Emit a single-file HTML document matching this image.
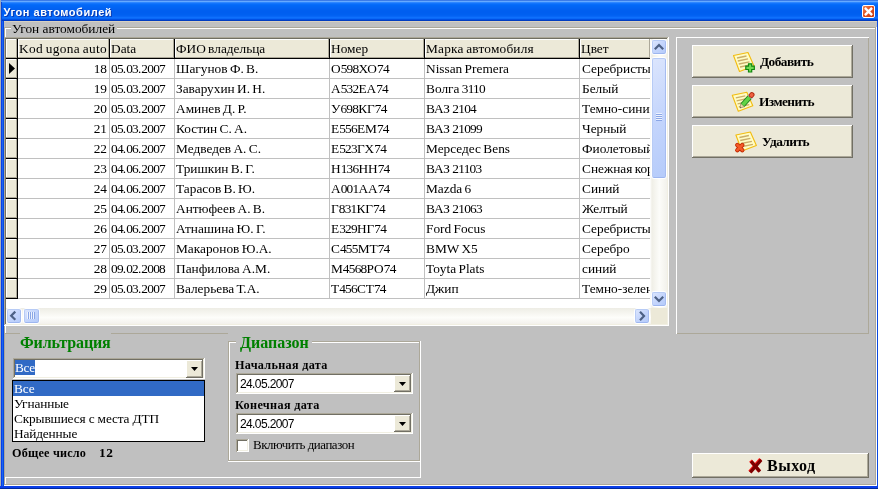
<!DOCTYPE html><html><head><meta charset="utf-8"><style>
html,body{margin:0;padding:0;width:878px;height:489px;overflow:hidden;background:#c0c0c0}
#w{position:relative;width:878px;height:489px;overflow:hidden;background:#c0c0c0;will-change:transform}
#w div{position:absolute;box-sizing:border-box}
.t{white-space:pre}
</style></head><body><div id="w">
<div style="left:0px;top:0px;width:878px;height:1px;background:#3a7be8;"></div>
<div style="left:0px;top:1px;width:878px;height:1px;background:#66aaff;"></div>
<div style="left:0px;top:2px;width:878px;height:1px;background:#2d86ff;"></div>
<div style="left:0px;top:3px;width:878px;height:1px;background:#1274fc;"></div>
<div style="left:0px;top:4px;width:878px;height:1px;background:#066cfa;"></div>
<div style="left:0px;top:5px;width:878px;height:1px;background:#0268f7;"></div>
<div style="left:0px;top:6px;width:878px;height:1px;background:#0266f5;"></div>
<div style="left:0px;top:7px;width:878px;height:1px;background:#0264f4;"></div>
<div style="left:0px;top:8px;width:878px;height:1px;background:#0262f2;"></div>
<div style="left:0px;top:9px;width:878px;height:1px;background:#0260f0;"></div>
<div style="left:0px;top:10px;width:878px;height:1px;background:#005ff0;"></div>
<div style="left:0px;top:11px;width:878px;height:1px;background:#005ef0;"></div>
<div style="left:0px;top:12px;width:878px;height:1px;background:#005ef0;"></div>
<div style="left:0px;top:13px;width:878px;height:1px;background:#005ff0;"></div>
<div style="left:0px;top:14px;width:878px;height:1px;background:#0060f1;"></div>
<div style="left:0px;top:15px;width:878px;height:1px;background:#0262f3;"></div>
<div style="left:0px;top:16px;width:878px;height:1px;background:#0866f6;"></div>
<div style="left:0px;top:17px;width:878px;height:1px;background:#0e70fc;"></div>
<div style="left:0px;top:18px;width:878px;height:1px;background:#0a68f8;"></div>
<div style="left:0px;top:19px;width:878px;height:1px;background:#0050e4;"></div>
<div style="left:0px;top:20px;width:878px;height:1px;background:#003cc0;"></div>
<div style="left:0px;top:21px;width:1px;height:468px;background:#a8b0b8;"></div>
<div style="left:1px;top:21px;width:1px;height:468px;background:#0a3ee8;"></div>
<div style="left:2px;top:21px;width:1px;height:468px;background:#1a66f0;"></div>
<div style="left:3px;top:21px;width:1px;height:468px;background:#0848e0;"></div>
<div style="left:877px;top:21px;width:1px;height:468px;background:#0a48e0;"></div>
<div style="left:0px;top:486px;width:878px;height:3px;background:#0a3ee8;"></div>
<div style="left:0px;top:488px;width:878px;height:1px;background:#002a9e;"></div>
<div class="t" style="left:3.5px;top:5.21px;line-height:14px;font:bold 11px 'Liberation Sans', sans-serif;line-height:14px;color:#fff;letter-spacing:0.55px;text-shadow:1px 1px 0 #0a3ab0">Угон автомобилей</div>
<div style="left:0px;top:0px;width:1px;height:21px;background:#9ca8c0;"></div>
<div style="left:1px;top:2px;width:1px;height:19px;background:#0846d8;"></div>
<div style="left:862px;top:5px;width:13px;height:13px;border:1px solid #fff;border-radius:2px;background:linear-gradient(135deg,#f08a5a,#e0501e 45%,#c83c10)"></div>
<svg style="position:absolute;left:862px;top:5px" width="13" height="13"><path d="M3.8 3.8 L9.2 9.2 M9.2 3.8 L3.8 9.2" stroke="#fff" stroke-width="2.4" stroke-linecap="square"/></svg>
<div style="left:4px;top:21px;width:873px;height:1px;background:#d8d0c0;"></div>
<div style="left:4px;top:27px;width:872px;height:1px;background:#aca899;"></div>
<div style="left:5px;top:28px;width:870px;height:1px;background:#ffffff;"></div>
<div style="left:4px;top:27px;width:1px;height:458px;background:#aca899;"></div>
<div style="left:5px;top:28px;width:1px;height:305px;background:#ffffff;"></div>
<div style="left:5px;top:478px;width:1px;height:6px;background:#ffffff;"></div>
<div style="left:875px;top:28px;width:1px;height:457px;background:#aca899;"></div>
<div style="left:876px;top:27px;width:1px;height:459px;background:#ffffff;"></div>
<div style="left:5px;top:484px;width:871px;height:1px;background:#aca899;"></div>
<div style="left:4px;top:485px;width:873px;height:1px;background:#ffffff;"></div>
<div style="left:11px;top:24px;width:106px;height:6px;background:#c0c0c0;"></div>
<div class="t" style="left:12px;top:20.50px;line-height:16px;font:13.33px 'Liberation Serif', serif;line-height:16px;color:#000;">Угон автомобилей</div>
<div style="left:4px;top:37px;width:664px;height:1px;background:#aca899;"></div>
<div style="left:4px;top:37px;width:1px;height:288px;background:#aca899;"></div>
<div style="left:5px;top:38px;width:662px;height:1px;background:#716f64;"></div>
<div style="left:5px;top:38px;width:1px;height:286px;background:#716f64;"></div>
<div style="left:668px;top:37px;width:1px;height:289px;background:#ffffff;"></div>
<div style="left:4px;top:325px;width:665px;height:1px;background:#ffffff;"></div>
<div style="left:667px;top:38px;width:1px;height:287px;background:#f1efe2;"></div>
<div style="left:5px;top:324px;width:663px;height:1px;background:#f1efe2;"></div>
<div style="left:6px;top:39px;width:661px;height:285px;background:#ffffff;"></div>
<div style="left:6px;top:39px;width:644px;height:20px;background:#ece9d8;"></div>
<div style="left:6px;top:58px;width:644px;height:1px;background:#000;"></div>
<div style="left:6px;top:39px;width:11px;height:1px;background:#ffffff;"></div>
<div style="left:6px;top:39px;width:1px;height:19px;background:#ffffff;"></div>
<div style="left:6px;top:57px;width:10px;height:1px;background:#aca899;"></div>
<div style="left:16px;top:39px;width:1px;height:19px;background:#aca899;"></div>
<div style="left:18px;top:39px;width:91px;height:1px;background:#ffffff;"></div>
<div style="left:18px;top:39px;width:1px;height:19px;background:#ffffff;"></div>
<div style="left:18px;top:57px;width:90px;height:1px;background:#aca899;"></div>
<div style="left:108px;top:39px;width:1px;height:19px;background:#aca899;"></div>
<div style="left:110px;top:39px;width:64px;height:1px;background:#ffffff;"></div>
<div style="left:110px;top:39px;width:1px;height:19px;background:#ffffff;"></div>
<div style="left:110px;top:57px;width:63px;height:1px;background:#aca899;"></div>
<div style="left:173px;top:39px;width:1px;height:19px;background:#aca899;"></div>
<div style="left:175px;top:39px;width:154px;height:1px;background:#ffffff;"></div>
<div style="left:175px;top:39px;width:1px;height:19px;background:#ffffff;"></div>
<div style="left:175px;top:57px;width:153px;height:1px;background:#aca899;"></div>
<div style="left:328px;top:39px;width:1px;height:19px;background:#aca899;"></div>
<div style="left:330px;top:39px;width:94px;height:1px;background:#ffffff;"></div>
<div style="left:330px;top:39px;width:1px;height:19px;background:#ffffff;"></div>
<div style="left:330px;top:57px;width:93px;height:1px;background:#aca899;"></div>
<div style="left:423px;top:39px;width:1px;height:19px;background:#aca899;"></div>
<div style="left:425px;top:39px;width:154px;height:1px;background:#ffffff;"></div>
<div style="left:425px;top:39px;width:1px;height:19px;background:#ffffff;"></div>
<div style="left:425px;top:57px;width:153px;height:1px;background:#aca899;"></div>
<div style="left:578px;top:39px;width:1px;height:19px;background:#aca899;"></div>
<div style="left:580px;top:39px;width:70px;height:1px;background:#ffffff;"></div>
<div style="left:580px;top:39px;width:1px;height:19px;background:#ffffff;"></div>
<div style="left:580px;top:57px;width:69px;height:1px;background:#aca899;"></div>
<div style="left:649px;top:39px;width:1px;height:19px;background:#aca899;"></div>
<div style="left:17px;top:39px;width:1px;height:20px;background:#000;"></div>
<div style="left:109px;top:39px;width:1px;height:20px;background:#000;"></div>
<div style="left:174px;top:39px;width:1px;height:20px;background:#000;"></div>
<div style="left:329px;top:39px;width:1px;height:20px;background:#000;"></div>
<div style="left:424px;top:39px;width:1px;height:20px;background:#000;"></div>
<div style="left:579px;top:39px;width:1px;height:20px;background:#000;"></div>
<div class="t" style="left:19px;top:40.50px;line-height:16px;font:13.33px 'Liberation Serif', serif;line-height:16px;color:#000;word-spacing:-1px;letter-spacing:0.35px">Kod ugona auto</div>
<div class="t" style="left:111px;top:40.50px;line-height:16px;font:13.33px 'Liberation Serif', serif;line-height:16px;color:#000;">Data</div>
<div class="t" style="left:176px;top:40.50px;line-height:16px;font:13.33px 'Liberation Serif', serif;line-height:16px;color:#000;word-spacing:-1px">ФИО владельца</div>
<div class="t" style="left:331px;top:40.50px;line-height:16px;font:13.33px 'Liberation Serif', serif;line-height:16px;color:#000;">Номер</div>
<div class="t" style="left:426px;top:40.50px;line-height:16px;font:13.33px 'Liberation Serif', serif;line-height:16px;color:#000;word-spacing:-1px;letter-spacing:0.2px">Марка автомобиля</div>
<div class="t" style="left:581px;top:40.50px;line-height:16px;font:13.33px 'Liberation Serif', serif;line-height:16px;color:#000;">Цвет</div>
<div style="left:6px;top:59px;width:11px;height:19px;background:#ece9d8;"></div>
<div style="left:6px;top:59px;width:11px;height:1px;background:#ffffff;"></div>
<div style="left:6px;top:59px;width:1px;height:19px;background:#ffffff;"></div>
<div style="left:6px;top:77px;width:11px;height:1px;background:#aca899;"></div>
<div style="left:16px;top:59px;width:1px;height:19px;background:#aca899;"></div>
<div style="left:6px;top:78px;width:12px;height:1px;background:#000;"></div>
<div style="left:17px;top:59px;width:1px;height:20px;background:#000;"></div>
<div style="left:18px;top:78px;width:632px;height:1px;background:#c0c0c0;"></div>
<div style="left:109px;top:59px;width:1px;height:20px;background:#c0c0c0;"></div>
<div style="left:174px;top:59px;width:1px;height:20px;background:#c0c0c0;"></div>
<div style="left:329px;top:59px;width:1px;height:20px;background:#c0c0c0;"></div>
<div style="left:424px;top:59px;width:1px;height:20px;background:#c0c0c0;"></div>
<div style="left:579px;top:59px;width:1px;height:20px;background:#c0c0c0;"></div>
<div class="t" style="left:18px;top:60.50px;line-height:16px;font:13.33px 'Liberation Serif', serif;line-height:16px;color:#000;width:89px;text-align:right"><span style="letter-spacing:0px">18</span></div>
<div class="t" style="left:111px;top:60.50px;line-height:16px;font:13.33px 'Liberation Serif', serif;line-height:16px;color:#000;word-spacing:-1px"><span style="letter-spacing:-0.75px">05</span>.<span style="letter-spacing:-0.75px">03</span>.<span style="letter-spacing:-0.75px">2007</span></div>
<div class="t" style="left:176px;top:60.50px;line-height:16px;font:13.33px 'Liberation Serif', serif;line-height:16px;color:#000;word-spacing:-1px">Шагунов Ф. В.</div>
<div class="t" style="left:331px;top:60.50px;line-height:16px;font:13.33px 'Liberation Serif', serif;line-height:16px;color:#000;word-spacing:-1px">О<span style="letter-spacing:-0.75px">598</span>ХО<span style="letter-spacing:-0.75px">74</span></div>
<div class="t" style="left:426px;top:60.50px;line-height:16px;font:13.33px 'Liberation Serif', serif;line-height:16px;color:#000;word-spacing:-1px">Nissan Premera</div>
<div style="left:580px;top:59px;width:70px;height:19px;overflow:hidden">
<div class="t" style="left:2px;top:1.50px;font:13.33px 'Liberation Serif', serif;line-height:16px;word-spacing:-1px">Серебристый</div></div>
<div style="left:6px;top:79px;width:11px;height:19px;background:#ece9d8;"></div>
<div style="left:6px;top:79px;width:11px;height:1px;background:#ffffff;"></div>
<div style="left:6px;top:79px;width:1px;height:19px;background:#ffffff;"></div>
<div style="left:6px;top:97px;width:11px;height:1px;background:#aca899;"></div>
<div style="left:16px;top:79px;width:1px;height:19px;background:#aca899;"></div>
<div style="left:6px;top:98px;width:12px;height:1px;background:#000;"></div>
<div style="left:17px;top:79px;width:1px;height:20px;background:#000;"></div>
<div style="left:18px;top:98px;width:632px;height:1px;background:#c0c0c0;"></div>
<div style="left:109px;top:79px;width:1px;height:20px;background:#c0c0c0;"></div>
<div style="left:174px;top:79px;width:1px;height:20px;background:#c0c0c0;"></div>
<div style="left:329px;top:79px;width:1px;height:20px;background:#c0c0c0;"></div>
<div style="left:424px;top:79px;width:1px;height:20px;background:#c0c0c0;"></div>
<div style="left:579px;top:79px;width:1px;height:20px;background:#c0c0c0;"></div>
<div class="t" style="left:18px;top:80.50px;line-height:16px;font:13.33px 'Liberation Serif', serif;line-height:16px;color:#000;width:89px;text-align:right"><span style="letter-spacing:0px">19</span></div>
<div class="t" style="left:111px;top:80.50px;line-height:16px;font:13.33px 'Liberation Serif', serif;line-height:16px;color:#000;word-spacing:-1px"><span style="letter-spacing:-0.75px">05</span>.<span style="letter-spacing:-0.75px">03</span>.<span style="letter-spacing:-0.75px">2007</span></div>
<div class="t" style="left:176px;top:80.50px;line-height:16px;font:13.33px 'Liberation Serif', serif;line-height:16px;color:#000;word-spacing:-1px">Заварухин И. Н.</div>
<div class="t" style="left:331px;top:80.50px;line-height:16px;font:13.33px 'Liberation Serif', serif;line-height:16px;color:#000;word-spacing:-1px">А<span style="letter-spacing:-0.75px">532</span>ЕА<span style="letter-spacing:-0.75px">74</span></div>
<div class="t" style="left:426px;top:80.50px;line-height:16px;font:13.33px 'Liberation Serif', serif;line-height:16px;color:#000;word-spacing:-1px">Волга <span style="letter-spacing:-0.75px">3110</span></div>
<div style="left:580px;top:79px;width:70px;height:19px;overflow:hidden">
<div class="t" style="left:2px;top:1.50px;font:13.33px 'Liberation Serif', serif;line-height:16px;word-spacing:-1px">Белый</div></div>
<div style="left:6px;top:99px;width:11px;height:19px;background:#ece9d8;"></div>
<div style="left:6px;top:99px;width:11px;height:1px;background:#ffffff;"></div>
<div style="left:6px;top:99px;width:1px;height:19px;background:#ffffff;"></div>
<div style="left:6px;top:117px;width:11px;height:1px;background:#aca899;"></div>
<div style="left:16px;top:99px;width:1px;height:19px;background:#aca899;"></div>
<div style="left:6px;top:118px;width:12px;height:1px;background:#000;"></div>
<div style="left:17px;top:99px;width:1px;height:20px;background:#000;"></div>
<div style="left:18px;top:118px;width:632px;height:1px;background:#c0c0c0;"></div>
<div style="left:109px;top:99px;width:1px;height:20px;background:#c0c0c0;"></div>
<div style="left:174px;top:99px;width:1px;height:20px;background:#c0c0c0;"></div>
<div style="left:329px;top:99px;width:1px;height:20px;background:#c0c0c0;"></div>
<div style="left:424px;top:99px;width:1px;height:20px;background:#c0c0c0;"></div>
<div style="left:579px;top:99px;width:1px;height:20px;background:#c0c0c0;"></div>
<div class="t" style="left:18px;top:100.50px;line-height:16px;font:13.33px 'Liberation Serif', serif;line-height:16px;color:#000;width:89px;text-align:right"><span style="letter-spacing:0px">20</span></div>
<div class="t" style="left:111px;top:100.50px;line-height:16px;font:13.33px 'Liberation Serif', serif;line-height:16px;color:#000;word-spacing:-1px"><span style="letter-spacing:-0.75px">05</span>.<span style="letter-spacing:-0.75px">03</span>.<span style="letter-spacing:-0.75px">2007</span></div>
<div class="t" style="left:176px;top:100.50px;line-height:16px;font:13.33px 'Liberation Serif', serif;line-height:16px;color:#000;word-spacing:-1px">Аминев Д. Р.</div>
<div class="t" style="left:331px;top:100.50px;line-height:16px;font:13.33px 'Liberation Serif', serif;line-height:16px;color:#000;word-spacing:-1px">У<span style="letter-spacing:-0.75px">698</span>КГ<span style="letter-spacing:-0.75px">74</span></div>
<div class="t" style="left:426px;top:100.50px;line-height:16px;font:13.33px 'Liberation Serif', serif;line-height:16px;color:#000;word-spacing:-1px">ВАЗ <span style="letter-spacing:-0.75px">2104</span></div>
<div style="left:580px;top:99px;width:70px;height:19px;overflow:hidden">
<div class="t" style="left:2px;top:1.50px;font:13.33px 'Liberation Serif', serif;line-height:16px;word-spacing:-1px">Темно-синий</div></div>
<div style="left:6px;top:119px;width:11px;height:19px;background:#ece9d8;"></div>
<div style="left:6px;top:119px;width:11px;height:1px;background:#ffffff;"></div>
<div style="left:6px;top:119px;width:1px;height:19px;background:#ffffff;"></div>
<div style="left:6px;top:137px;width:11px;height:1px;background:#aca899;"></div>
<div style="left:16px;top:119px;width:1px;height:19px;background:#aca899;"></div>
<div style="left:6px;top:138px;width:12px;height:1px;background:#000;"></div>
<div style="left:17px;top:119px;width:1px;height:20px;background:#000;"></div>
<div style="left:18px;top:138px;width:632px;height:1px;background:#c0c0c0;"></div>
<div style="left:109px;top:119px;width:1px;height:20px;background:#c0c0c0;"></div>
<div style="left:174px;top:119px;width:1px;height:20px;background:#c0c0c0;"></div>
<div style="left:329px;top:119px;width:1px;height:20px;background:#c0c0c0;"></div>
<div style="left:424px;top:119px;width:1px;height:20px;background:#c0c0c0;"></div>
<div style="left:579px;top:119px;width:1px;height:20px;background:#c0c0c0;"></div>
<div class="t" style="left:18px;top:120.50px;line-height:16px;font:13.33px 'Liberation Serif', serif;line-height:16px;color:#000;width:89px;text-align:right"><span style="letter-spacing:0px">21</span></div>
<div class="t" style="left:111px;top:120.50px;line-height:16px;font:13.33px 'Liberation Serif', serif;line-height:16px;color:#000;word-spacing:-1px"><span style="letter-spacing:-0.75px">05</span>.<span style="letter-spacing:-0.75px">03</span>.<span style="letter-spacing:-0.75px">2007</span></div>
<div class="t" style="left:176px;top:120.50px;line-height:16px;font:13.33px 'Liberation Serif', serif;line-height:16px;color:#000;word-spacing:-1px">Костин С. А.</div>
<div class="t" style="left:331px;top:120.50px;line-height:16px;font:13.33px 'Liberation Serif', serif;line-height:16px;color:#000;word-spacing:-1px">Е<span style="letter-spacing:-0.75px">556</span>ЕМ<span style="letter-spacing:-0.75px">74</span></div>
<div class="t" style="left:426px;top:120.50px;line-height:16px;font:13.33px 'Liberation Serif', serif;line-height:16px;color:#000;word-spacing:-1px">ВАЗ <span style="letter-spacing:-0.75px">21099</span></div>
<div style="left:580px;top:119px;width:70px;height:19px;overflow:hidden">
<div class="t" style="left:2px;top:1.50px;font:13.33px 'Liberation Serif', serif;line-height:16px;word-spacing:-1px">Черный</div></div>
<div style="left:6px;top:139px;width:11px;height:19px;background:#ece9d8;"></div>
<div style="left:6px;top:139px;width:11px;height:1px;background:#ffffff;"></div>
<div style="left:6px;top:139px;width:1px;height:19px;background:#ffffff;"></div>
<div style="left:6px;top:157px;width:11px;height:1px;background:#aca899;"></div>
<div style="left:16px;top:139px;width:1px;height:19px;background:#aca899;"></div>
<div style="left:6px;top:158px;width:12px;height:1px;background:#000;"></div>
<div style="left:17px;top:139px;width:1px;height:20px;background:#000;"></div>
<div style="left:18px;top:158px;width:632px;height:1px;background:#c0c0c0;"></div>
<div style="left:109px;top:139px;width:1px;height:20px;background:#c0c0c0;"></div>
<div style="left:174px;top:139px;width:1px;height:20px;background:#c0c0c0;"></div>
<div style="left:329px;top:139px;width:1px;height:20px;background:#c0c0c0;"></div>
<div style="left:424px;top:139px;width:1px;height:20px;background:#c0c0c0;"></div>
<div style="left:579px;top:139px;width:1px;height:20px;background:#c0c0c0;"></div>
<div class="t" style="left:18px;top:140.50px;line-height:16px;font:13.33px 'Liberation Serif', serif;line-height:16px;color:#000;width:89px;text-align:right"><span style="letter-spacing:0px">22</span></div>
<div class="t" style="left:111px;top:140.50px;line-height:16px;font:13.33px 'Liberation Serif', serif;line-height:16px;color:#000;word-spacing:-1px"><span style="letter-spacing:-0.75px">04</span>.<span style="letter-spacing:-0.75px">06</span>.<span style="letter-spacing:-0.75px">2007</span></div>
<div class="t" style="left:176px;top:140.50px;line-height:16px;font:13.33px 'Liberation Serif', serif;line-height:16px;color:#000;word-spacing:-1px">Медведев А. С.</div>
<div class="t" style="left:331px;top:140.50px;line-height:16px;font:13.33px 'Liberation Serif', serif;line-height:16px;color:#000;word-spacing:-1px">Е<span style="letter-spacing:-0.75px">523</span>ГХ<span style="letter-spacing:-0.75px">74</span></div>
<div class="t" style="left:426px;top:140.50px;line-height:16px;font:13.33px 'Liberation Serif', serif;line-height:16px;color:#000;word-spacing:-1px">Мерседес Bens</div>
<div style="left:580px;top:139px;width:70px;height:19px;overflow:hidden">
<div class="t" style="left:2px;top:1.50px;font:13.33px 'Liberation Serif', serif;line-height:16px;word-spacing:-1px">Фиолетовый</div></div>
<div style="left:6px;top:159px;width:11px;height:19px;background:#ece9d8;"></div>
<div style="left:6px;top:159px;width:11px;height:1px;background:#ffffff;"></div>
<div style="left:6px;top:159px;width:1px;height:19px;background:#ffffff;"></div>
<div style="left:6px;top:177px;width:11px;height:1px;background:#aca899;"></div>
<div style="left:16px;top:159px;width:1px;height:19px;background:#aca899;"></div>
<div style="left:6px;top:178px;width:12px;height:1px;background:#000;"></div>
<div style="left:17px;top:159px;width:1px;height:20px;background:#000;"></div>
<div style="left:18px;top:178px;width:632px;height:1px;background:#c0c0c0;"></div>
<div style="left:109px;top:159px;width:1px;height:20px;background:#c0c0c0;"></div>
<div style="left:174px;top:159px;width:1px;height:20px;background:#c0c0c0;"></div>
<div style="left:329px;top:159px;width:1px;height:20px;background:#c0c0c0;"></div>
<div style="left:424px;top:159px;width:1px;height:20px;background:#c0c0c0;"></div>
<div style="left:579px;top:159px;width:1px;height:20px;background:#c0c0c0;"></div>
<div class="t" style="left:18px;top:160.50px;line-height:16px;font:13.33px 'Liberation Serif', serif;line-height:16px;color:#000;width:89px;text-align:right"><span style="letter-spacing:0px">23</span></div>
<div class="t" style="left:111px;top:160.50px;line-height:16px;font:13.33px 'Liberation Serif', serif;line-height:16px;color:#000;word-spacing:-1px"><span style="letter-spacing:-0.75px">04</span>.<span style="letter-spacing:-0.75px">06</span>.<span style="letter-spacing:-0.75px">2007</span></div>
<div class="t" style="left:176px;top:160.50px;line-height:16px;font:13.33px 'Liberation Serif', serif;line-height:16px;color:#000;word-spacing:-1px">Тришкин В. Г.</div>
<div class="t" style="left:331px;top:160.50px;line-height:16px;font:13.33px 'Liberation Serif', serif;line-height:16px;color:#000;word-spacing:-1px">Н<span style="letter-spacing:-0.75px">136</span>НН<span style="letter-spacing:-0.75px">74</span></div>
<div class="t" style="left:426px;top:160.50px;line-height:16px;font:13.33px 'Liberation Serif', serif;line-height:16px;color:#000;word-spacing:-1px">ВАЗ <span style="letter-spacing:-0.75px">21103</span></div>
<div style="left:580px;top:159px;width:70px;height:19px;overflow:hidden">
<div class="t" style="left:2px;top:1.50px;font:13.33px 'Liberation Serif', serif;line-height:16px;word-spacing:-1px">Снежная королева</div></div>
<div style="left:6px;top:179px;width:11px;height:19px;background:#ece9d8;"></div>
<div style="left:6px;top:179px;width:11px;height:1px;background:#ffffff;"></div>
<div style="left:6px;top:179px;width:1px;height:19px;background:#ffffff;"></div>
<div style="left:6px;top:197px;width:11px;height:1px;background:#aca899;"></div>
<div style="left:16px;top:179px;width:1px;height:19px;background:#aca899;"></div>
<div style="left:6px;top:198px;width:12px;height:1px;background:#000;"></div>
<div style="left:17px;top:179px;width:1px;height:20px;background:#000;"></div>
<div style="left:18px;top:198px;width:632px;height:1px;background:#c0c0c0;"></div>
<div style="left:109px;top:179px;width:1px;height:20px;background:#c0c0c0;"></div>
<div style="left:174px;top:179px;width:1px;height:20px;background:#c0c0c0;"></div>
<div style="left:329px;top:179px;width:1px;height:20px;background:#c0c0c0;"></div>
<div style="left:424px;top:179px;width:1px;height:20px;background:#c0c0c0;"></div>
<div style="left:579px;top:179px;width:1px;height:20px;background:#c0c0c0;"></div>
<div class="t" style="left:18px;top:180.50px;line-height:16px;font:13.33px 'Liberation Serif', serif;line-height:16px;color:#000;width:89px;text-align:right"><span style="letter-spacing:0px">24</span></div>
<div class="t" style="left:111px;top:180.50px;line-height:16px;font:13.33px 'Liberation Serif', serif;line-height:16px;color:#000;word-spacing:-1px"><span style="letter-spacing:-0.75px">04</span>.<span style="letter-spacing:-0.75px">06</span>.<span style="letter-spacing:-0.75px">2007</span></div>
<div class="t" style="left:176px;top:180.50px;line-height:16px;font:13.33px 'Liberation Serif', serif;line-height:16px;color:#000;word-spacing:-1px">Тарасов В. Ю.</div>
<div class="t" style="left:331px;top:180.50px;line-height:16px;font:13.33px 'Liberation Serif', serif;line-height:16px;color:#000;word-spacing:-1px">А<span style="letter-spacing:-0.75px">001</span>АА<span style="letter-spacing:-0.75px">74</span></div>
<div class="t" style="left:426px;top:180.50px;line-height:16px;font:13.33px 'Liberation Serif', serif;line-height:16px;color:#000;word-spacing:-1px">Mazda <span style="letter-spacing:-0.75px">6</span></div>
<div style="left:580px;top:179px;width:70px;height:19px;overflow:hidden">
<div class="t" style="left:2px;top:1.50px;font:13.33px 'Liberation Serif', serif;line-height:16px;word-spacing:-1px">Синий</div></div>
<div style="left:6px;top:199px;width:11px;height:19px;background:#ece9d8;"></div>
<div style="left:6px;top:199px;width:11px;height:1px;background:#ffffff;"></div>
<div style="left:6px;top:199px;width:1px;height:19px;background:#ffffff;"></div>
<div style="left:6px;top:217px;width:11px;height:1px;background:#aca899;"></div>
<div style="left:16px;top:199px;width:1px;height:19px;background:#aca899;"></div>
<div style="left:6px;top:218px;width:12px;height:1px;background:#000;"></div>
<div style="left:17px;top:199px;width:1px;height:20px;background:#000;"></div>
<div style="left:18px;top:218px;width:632px;height:1px;background:#c0c0c0;"></div>
<div style="left:109px;top:199px;width:1px;height:20px;background:#c0c0c0;"></div>
<div style="left:174px;top:199px;width:1px;height:20px;background:#c0c0c0;"></div>
<div style="left:329px;top:199px;width:1px;height:20px;background:#c0c0c0;"></div>
<div style="left:424px;top:199px;width:1px;height:20px;background:#c0c0c0;"></div>
<div style="left:579px;top:199px;width:1px;height:20px;background:#c0c0c0;"></div>
<div class="t" style="left:18px;top:200.50px;line-height:16px;font:13.33px 'Liberation Serif', serif;line-height:16px;color:#000;width:89px;text-align:right"><span style="letter-spacing:0px">25</span></div>
<div class="t" style="left:111px;top:200.50px;line-height:16px;font:13.33px 'Liberation Serif', serif;line-height:16px;color:#000;word-spacing:-1px"><span style="letter-spacing:-0.75px">04</span>.<span style="letter-spacing:-0.75px">06</span>.<span style="letter-spacing:-0.75px">2007</span></div>
<div class="t" style="left:176px;top:200.50px;line-height:16px;font:13.33px 'Liberation Serif', serif;line-height:16px;color:#000;word-spacing:-1px">Антюфеев А. В.</div>
<div class="t" style="left:331px;top:200.50px;line-height:16px;font:13.33px 'Liberation Serif', serif;line-height:16px;color:#000;word-spacing:-1px">Г<span style="letter-spacing:-0.75px">831</span>КГ<span style="letter-spacing:-0.75px">74</span></div>
<div class="t" style="left:426px;top:200.50px;line-height:16px;font:13.33px 'Liberation Serif', serif;line-height:16px;color:#000;word-spacing:-1px">ВАЗ <span style="letter-spacing:-0.75px">21063</span></div>
<div style="left:580px;top:199px;width:70px;height:19px;overflow:hidden">
<div class="t" style="left:2px;top:1.50px;font:13.33px 'Liberation Serif', serif;line-height:16px;word-spacing:-1px">Желтый</div></div>
<div style="left:6px;top:219px;width:11px;height:19px;background:#ece9d8;"></div>
<div style="left:6px;top:219px;width:11px;height:1px;background:#ffffff;"></div>
<div style="left:6px;top:219px;width:1px;height:19px;background:#ffffff;"></div>
<div style="left:6px;top:237px;width:11px;height:1px;background:#aca899;"></div>
<div style="left:16px;top:219px;width:1px;height:19px;background:#aca899;"></div>
<div style="left:6px;top:238px;width:12px;height:1px;background:#000;"></div>
<div style="left:17px;top:219px;width:1px;height:20px;background:#000;"></div>
<div style="left:18px;top:238px;width:632px;height:1px;background:#c0c0c0;"></div>
<div style="left:109px;top:219px;width:1px;height:20px;background:#c0c0c0;"></div>
<div style="left:174px;top:219px;width:1px;height:20px;background:#c0c0c0;"></div>
<div style="left:329px;top:219px;width:1px;height:20px;background:#c0c0c0;"></div>
<div style="left:424px;top:219px;width:1px;height:20px;background:#c0c0c0;"></div>
<div style="left:579px;top:219px;width:1px;height:20px;background:#c0c0c0;"></div>
<div class="t" style="left:18px;top:220.50px;line-height:16px;font:13.33px 'Liberation Serif', serif;line-height:16px;color:#000;width:89px;text-align:right"><span style="letter-spacing:0px">26</span></div>
<div class="t" style="left:111px;top:220.50px;line-height:16px;font:13.33px 'Liberation Serif', serif;line-height:16px;color:#000;word-spacing:-1px"><span style="letter-spacing:-0.75px">04</span>.<span style="letter-spacing:-0.75px">06</span>.<span style="letter-spacing:-0.75px">2007</span></div>
<div class="t" style="left:176px;top:220.50px;line-height:16px;font:13.33px 'Liberation Serif', serif;line-height:16px;color:#000;word-spacing:-1px">Атнашина Ю. Г.</div>
<div class="t" style="left:331px;top:220.50px;line-height:16px;font:13.33px 'Liberation Serif', serif;line-height:16px;color:#000;word-spacing:-1px">Е<span style="letter-spacing:-0.75px">329</span>НГ<span style="letter-spacing:-0.75px">74</span></div>
<div class="t" style="left:426px;top:220.50px;line-height:16px;font:13.33px 'Liberation Serif', serif;line-height:16px;color:#000;word-spacing:-1px">Ford Focus</div>
<div style="left:580px;top:219px;width:70px;height:19px;overflow:hidden">
<div class="t" style="left:2px;top:1.50px;font:13.33px 'Liberation Serif', serif;line-height:16px;word-spacing:-1px">Серебристый</div></div>
<div style="left:6px;top:239px;width:11px;height:19px;background:#ece9d8;"></div>
<div style="left:6px;top:239px;width:11px;height:1px;background:#ffffff;"></div>
<div style="left:6px;top:239px;width:1px;height:19px;background:#ffffff;"></div>
<div style="left:6px;top:257px;width:11px;height:1px;background:#aca899;"></div>
<div style="left:16px;top:239px;width:1px;height:19px;background:#aca899;"></div>
<div style="left:6px;top:258px;width:12px;height:1px;background:#000;"></div>
<div style="left:17px;top:239px;width:1px;height:20px;background:#000;"></div>
<div style="left:18px;top:258px;width:632px;height:1px;background:#c0c0c0;"></div>
<div style="left:109px;top:239px;width:1px;height:20px;background:#c0c0c0;"></div>
<div style="left:174px;top:239px;width:1px;height:20px;background:#c0c0c0;"></div>
<div style="left:329px;top:239px;width:1px;height:20px;background:#c0c0c0;"></div>
<div style="left:424px;top:239px;width:1px;height:20px;background:#c0c0c0;"></div>
<div style="left:579px;top:239px;width:1px;height:20px;background:#c0c0c0;"></div>
<div class="t" style="left:18px;top:240.50px;line-height:16px;font:13.33px 'Liberation Serif', serif;line-height:16px;color:#000;width:89px;text-align:right"><span style="letter-spacing:0px">27</span></div>
<div class="t" style="left:111px;top:240.50px;line-height:16px;font:13.33px 'Liberation Serif', serif;line-height:16px;color:#000;word-spacing:-1px"><span style="letter-spacing:-0.75px">05</span>.<span style="letter-spacing:-0.75px">03</span>.<span style="letter-spacing:-0.75px">2007</span></div>
<div class="t" style="left:176px;top:240.50px;line-height:16px;font:13.33px 'Liberation Serif', serif;line-height:16px;color:#000;word-spacing:-1px">Макаронов Ю.А.</div>
<div class="t" style="left:331px;top:240.50px;line-height:16px;font:13.33px 'Liberation Serif', serif;line-height:16px;color:#000;word-spacing:-1px">С<span style="letter-spacing:-0.75px">455</span>МТ<span style="letter-spacing:-0.75px">74</span></div>
<div class="t" style="left:426px;top:240.50px;line-height:16px;font:13.33px 'Liberation Serif', serif;line-height:16px;color:#000;word-spacing:-1px">BMW X<span style="letter-spacing:-0.75px">5</span></div>
<div style="left:580px;top:239px;width:70px;height:19px;overflow:hidden">
<div class="t" style="left:2px;top:1.50px;font:13.33px 'Liberation Serif', serif;line-height:16px;word-spacing:-1px">Серебро</div></div>
<div style="left:6px;top:259px;width:11px;height:19px;background:#ece9d8;"></div>
<div style="left:6px;top:259px;width:11px;height:1px;background:#ffffff;"></div>
<div style="left:6px;top:259px;width:1px;height:19px;background:#ffffff;"></div>
<div style="left:6px;top:277px;width:11px;height:1px;background:#aca899;"></div>
<div style="left:16px;top:259px;width:1px;height:19px;background:#aca899;"></div>
<div style="left:6px;top:278px;width:12px;height:1px;background:#000;"></div>
<div style="left:17px;top:259px;width:1px;height:20px;background:#000;"></div>
<div style="left:18px;top:278px;width:632px;height:1px;background:#c0c0c0;"></div>
<div style="left:109px;top:259px;width:1px;height:20px;background:#c0c0c0;"></div>
<div style="left:174px;top:259px;width:1px;height:20px;background:#c0c0c0;"></div>
<div style="left:329px;top:259px;width:1px;height:20px;background:#c0c0c0;"></div>
<div style="left:424px;top:259px;width:1px;height:20px;background:#c0c0c0;"></div>
<div style="left:579px;top:259px;width:1px;height:20px;background:#c0c0c0;"></div>
<div class="t" style="left:18px;top:260.50px;line-height:16px;font:13.33px 'Liberation Serif', serif;line-height:16px;color:#000;width:89px;text-align:right"><span style="letter-spacing:0px">28</span></div>
<div class="t" style="left:111px;top:260.50px;line-height:16px;font:13.33px 'Liberation Serif', serif;line-height:16px;color:#000;word-spacing:-1px"><span style="letter-spacing:-0.75px">09</span>.<span style="letter-spacing:-0.75px">02</span>.<span style="letter-spacing:-0.75px">2008</span></div>
<div class="t" style="left:176px;top:260.50px;line-height:16px;font:13.33px 'Liberation Serif', serif;line-height:16px;color:#000;word-spacing:-1px">Панфилова А.М.</div>
<div class="t" style="left:331px;top:260.50px;line-height:16px;font:13.33px 'Liberation Serif', serif;line-height:16px;color:#000;word-spacing:-1px">М<span style="letter-spacing:-0.75px">4568</span>РО<span style="letter-spacing:-0.75px">74</span></div>
<div class="t" style="left:426px;top:260.50px;line-height:16px;font:13.33px 'Liberation Serif', serif;line-height:16px;color:#000;word-spacing:-1px">Toyta Plats</div>
<div style="left:580px;top:259px;width:70px;height:19px;overflow:hidden">
<div class="t" style="left:2px;top:1.50px;font:13.33px 'Liberation Serif', serif;line-height:16px;word-spacing:-1px">синий</div></div>
<div style="left:6px;top:279px;width:11px;height:19px;background:#ece9d8;"></div>
<div style="left:6px;top:279px;width:11px;height:1px;background:#ffffff;"></div>
<div style="left:6px;top:279px;width:1px;height:19px;background:#ffffff;"></div>
<div style="left:6px;top:297px;width:11px;height:1px;background:#aca899;"></div>
<div style="left:16px;top:279px;width:1px;height:19px;background:#aca899;"></div>
<div style="left:6px;top:298px;width:12px;height:1px;background:#000;"></div>
<div style="left:17px;top:279px;width:1px;height:20px;background:#000;"></div>
<div style="left:18px;top:298px;width:632px;height:1px;background:#c0c0c0;"></div>
<div style="left:109px;top:279px;width:1px;height:20px;background:#c0c0c0;"></div>
<div style="left:174px;top:279px;width:1px;height:20px;background:#c0c0c0;"></div>
<div style="left:329px;top:279px;width:1px;height:20px;background:#c0c0c0;"></div>
<div style="left:424px;top:279px;width:1px;height:20px;background:#c0c0c0;"></div>
<div style="left:579px;top:279px;width:1px;height:20px;background:#c0c0c0;"></div>
<div class="t" style="left:18px;top:280.50px;line-height:16px;font:13.33px 'Liberation Serif', serif;line-height:16px;color:#000;width:89px;text-align:right"><span style="letter-spacing:0px">29</span></div>
<div class="t" style="left:111px;top:280.50px;line-height:16px;font:13.33px 'Liberation Serif', serif;line-height:16px;color:#000;word-spacing:-1px"><span style="letter-spacing:-0.75px">05</span>.<span style="letter-spacing:-0.75px">03</span>.<span style="letter-spacing:-0.75px">2007</span></div>
<div class="t" style="left:176px;top:280.50px;line-height:16px;font:13.33px 'Liberation Serif', serif;line-height:16px;color:#000;word-spacing:-1px">Валерьева Т.А.</div>
<div class="t" style="left:331px;top:280.50px;line-height:16px;font:13.33px 'Liberation Serif', serif;line-height:16px;color:#000;word-spacing:-1px">Т<span style="letter-spacing:-0.75px">456</span>СТ<span style="letter-spacing:-0.75px">74</span></div>
<div class="t" style="left:426px;top:280.50px;line-height:16px;font:13.33px 'Liberation Serif', serif;line-height:16px;color:#000;word-spacing:-1px">Джип</div>
<div style="left:580px;top:279px;width:70px;height:19px;overflow:hidden">
<div class="t" style="left:2px;top:1.50px;font:13.33px 'Liberation Serif', serif;line-height:16px;word-spacing:-1px">Темно-зеленый</div></div>
<svg style="position:absolute;left:9px;top:63px" width="7" height="12"><path d="M0 0 L6 5.5 L0 11 Z" fill="#000"/></svg>
<div style="left:650px;top:39px;width:17px;height:269px;background:linear-gradient(90deg,#ffffff 0,#f0efe7 2px,#fcfcf9 55%,#f2f1eb);"></div>
<div style="left:6px;top:308px;width:645px;height:16px;background:linear-gradient(180deg,#eeede5,#fdfdfa 60%,#f3f1ec);"></div>
<div style="left:651px;top:308px;width:16px;height:16px;background:#ece9d8;"></div>
<div style="left:651px;top:39px;width:16px;height:16px;border:1px solid #fff;border-radius:3px;background:#fff"></div>
<div style="left:652px;top:40px;width:14px;height:14px;border-radius:2px;border:1px solid #b7cbf5;border-bottom-color:#9db6ef;border-right-color:#a6bcf0;background:linear-gradient(135deg,#dbe5fd,#c4d5fc 50%,#b5cbfa)"></div>
<svg style="position:absolute;left:651px;top:39px" width="16" height="16"><path d="M3.8 10.2 L8 6 L12.2 10.2" fill="none" stroke="#4d6185" stroke-width="2.2"/></svg>
<div style="left:651px;top:57px;width:16px;height:122px;border:1px solid #fff;border-radius:3px;background:#fff"></div>
<div style="left:652px;top:58px;width:14px;height:120px;border-radius:2px;border:1px solid #b7cbf5;border-bottom-color:#9db6ef;border-right-color:#a6bcf0;background:linear-gradient(135deg,#dbe5fd,#c4d5fc 50%,#b5cbfa)"></div>
<svg style="position:absolute;left:651px;top:57px" width="16" height="122"><path d="M5 56.5 H11" stroke="#eef3fe" stroke-width="1"/><path d="M5 57.5 H11" stroke="#8aa6e6" stroke-width="1"/><path d="M5 58.5 H11" stroke="#eef3fe" stroke-width="1"/><path d="M5 59.5 H11" stroke="#8aa6e6" stroke-width="1"/><path d="M5 60.5 H11" stroke="#eef3fe" stroke-width="1"/><path d="M5 61.5 H11" stroke="#8aa6e6" stroke-width="1"/><path d="M5 62.5 H11" stroke="#eef3fe" stroke-width="1"/><path d="M5 63.5 H11" stroke="#8aa6e6" stroke-width="1"/></svg>
<div style="left:651px;top:291px;width:16px;height:16px;border:1px solid #fff;border-radius:3px;background:#fff"></div>
<div style="left:652px;top:292px;width:14px;height:14px;border-radius:2px;border:1px solid #b7cbf5;border-bottom-color:#9db6ef;border-right-color:#a6bcf0;background:linear-gradient(135deg,#dbe5fd,#c4d5fc 50%,#b5cbfa)"></div>
<svg style="position:absolute;left:651px;top:291px" width="16" height="16"><path d="M3.8 5.8 L8 10 L12.2 5.8" fill="none" stroke="#4d6185" stroke-width="2.2"/></svg>
<div style="left:6px;top:308px;width:16px;height:16px;border:1px solid #fff;border-radius:3px;background:#fff"></div>
<div style="left:7px;top:309px;width:14px;height:14px;border-radius:2px;border:1px solid #b7cbf5;border-bottom-color:#9db6ef;border-right-color:#a6bcf0;background:linear-gradient(135deg,#dbe5fd,#c4d5fc 50%,#b5cbfa)"></div>
<svg style="position:absolute;left:6px;top:308px" width="16" height="16"><path d="M9.3 3.6 L5.2 7.7 L9.3 11.8" fill="none" stroke="#4d6185" stroke-width="2.2"/></svg>
<div style="left:23px;top:308px;width:17px;height:16px;border:1px solid #fff;border-radius:3px;background:#fff"></div>
<div style="left:24px;top:309px;width:15px;height:14px;border-radius:2px;border:1px solid #b7cbf5;border-bottom-color:#9db6ef;border-right-color:#a6bcf0;background:linear-gradient(135deg,#dbe5fd,#c4d5fc 50%,#b5cbfa)"></div>
<svg style="position:absolute;left:23px;top:308px" width="17" height="16"><path d="M4.5 4 V11" stroke="#eef3fe" stroke-width="1"/><path d="M5.5 4 V11" stroke="#8aa6e6" stroke-width="1"/><path d="M6.5 4 V11" stroke="#eef3fe" stroke-width="1"/><path d="M7.5 4 V11" stroke="#8aa6e6" stroke-width="1"/><path d="M8.5 4 V11" stroke="#eef3fe" stroke-width="1"/><path d="M9.5 4 V11" stroke="#8aa6e6" stroke-width="1"/><path d="M10.5 4 V11" stroke="#eef3fe" stroke-width="1"/><path d="M11.5 4 V11" stroke="#8aa6e6" stroke-width="1"/></svg>
<div style="left:634px;top:308px;width:16px;height:16px;border:1px solid #fff;border-radius:3px;background:#fff"></div>
<div style="left:635px;top:309px;width:14px;height:14px;border-radius:2px;border:1px solid #b7cbf5;border-bottom-color:#9db6ef;border-right-color:#a6bcf0;background:linear-gradient(135deg,#dbe5fd,#c4d5fc 50%,#b5cbfa)"></div>
<svg style="position:absolute;left:634px;top:308px" width="16" height="16"><path d="M6 3.8 L10 8 L6 12.2" fill="none" stroke="#4d6185" stroke-width="2.2"/></svg>
<div style="left:676px;top:37px;width:193px;height:1px;background:#ffffff;"></div>
<div style="left:676px;top:37px;width:1px;height:297px;background:#ffffff;"></div>
<div style="left:868px;top:38px;width:1px;height:296px;background:#aca899;"></div>
<div style="left:677px;top:333px;width:192px;height:1px;background:#aca899;"></div>
<div style="left:692px;top:45px;width:161px;height:33px;background:#ece9d8;"></div>
<div style="left:692px;top:45px;width:160px;height:1px;background:#ffffff;"></div>
<div style="left:692px;top:45px;width:1px;height:32px;background:#ffffff;"></div>
<div style="left:693px;top:76px;width:159px;height:1px;background:#aca899;"></div>
<div style="left:851px;top:46px;width:1px;height:31px;background:#aca899;"></div>
<div style="left:692px;top:77px;width:161px;height:1px;background:#716f64;"></div>
<div style="left:852px;top:45px;width:1px;height:33px;background:#716f64;"></div>
<svg style="position:absolute;left:731px;top:50px" width="28" height="26"><g transform="translate(1,1)">
<path d="M1.5 4.5 L16 1.5 L22 15 L7.5 20.5 Z" fill="#fffcc4" stroke="#f2bc10" stroke-width="1.1" stroke-linejoin="round"/>
<path d="M5 7 L14.5 5 M5.8 10 L16 7.8 M6.8 13 L17.5 10.8 M8 16 L18.5 13.8" stroke="#c9ad6a" stroke-width="1.3"/>
</g><path d="M17.5 13.8 H20.7 V16.2 H23.3 V19.5 H20.7 V22 H17.5 V19.5 H14.8 V16.2 H17.5 Z" fill="#72dc52" stroke="#0f860f" stroke-width="1.2" stroke-linejoin="miter"/></svg>
<div class="t" style="left:760px;top:53.50px;line-height:16px;font:bold 13.33px 'Liberation Serif', serif;line-height:16px;color:#000;letter-spacing:-0.55px">Добавить</div>
<div style="left:692px;top:85px;width:161px;height:33px;background:#ece9d8;"></div>
<div style="left:692px;top:85px;width:160px;height:1px;background:#ffffff;"></div>
<div style="left:692px;top:85px;width:1px;height:32px;background:#ffffff;"></div>
<div style="left:693px;top:116px;width:159px;height:1px;background:#aca899;"></div>
<div style="left:851px;top:86px;width:1px;height:31px;background:#aca899;"></div>
<div style="left:692px;top:117px;width:161px;height:1px;background:#716f64;"></div>
<div style="left:852px;top:85px;width:1px;height:33px;background:#716f64;"></div>
<svg style="position:absolute;left:730px;top:90px" width="28" height="26"><g transform="translate(0.8,0.8)">
<path d="M1.5 4.5 L16 1.5 L22 15 L7.5 20.5 Z" fill="#fffcc4" stroke="#f2bc10" stroke-width="1.1" stroke-linejoin="round"/>
<path d="M5 7 L14.5 5 M5.8 10 L16 7.8 M6.8 13 L17.5 10.8 M8 16 L18.5 13.8" stroke="#c9ad6a" stroke-width="1.3"/>
</g><path d="M10 18 L14.53 16.69 L10.81 13.35 Z" fill="#e8d8a8" stroke="#807050" stroke-width="0.6"/><path d="M10 18 L11.2 17.6 L10.4 16.9 Z" fill="#333"/><path d="M12.67 15.02 L19.6 7.3" stroke="#1e7a1e" stroke-width="5.4" stroke-linecap="butt"/><path d="M12.67 15.02 L19.6 7.3" stroke="#62d446" stroke-width="3.6" stroke-linecap="butt"/><path d="M19.6 7.3 L21 5.74" stroke="#9a9aa8" stroke-width="5.4" stroke-linecap="butt"/><path d="M19.8 7.08 L20.8 5.96" stroke="#f4f4f8" stroke-width="3.6" stroke-linecap="butt"/><path d="M21.4 5.3 L21.9 4.7" stroke="#b02810" stroke-width="5.2" stroke-linecap="round"/><path d="M21.4 5.3 L21.9 4.7" stroke="#f06040" stroke-width="3.4" stroke-linecap="round"/></svg>
<div class="t" style="left:759px;top:93.50px;line-height:16px;font:bold 13.33px 'Liberation Serif', serif;line-height:16px;color:#000;letter-spacing:-0.55px">Изменить</div>
<div style="left:692px;top:125px;width:161px;height:33px;background:#ece9d8;"></div>
<div style="left:692px;top:125px;width:160px;height:1px;background:#ffffff;"></div>
<div style="left:692px;top:125px;width:1px;height:32px;background:#ffffff;"></div>
<div style="left:693px;top:156px;width:159px;height:1px;background:#aca899;"></div>
<div style="left:851px;top:126px;width:1px;height:31px;background:#aca899;"></div>
<div style="left:692px;top:157px;width:161px;height:1px;background:#716f64;"></div>
<div style="left:852px;top:125px;width:1px;height:33px;background:#716f64;"></div>
<svg style="position:absolute;left:733px;top:130px" width="28" height="26"><g transform="translate(1.4,0.5)">
<path d="M1.5 4.5 L16 1.5 L22 15 L7.5 20.5 Z" fill="#fffcc4" stroke="#f2bc10" stroke-width="1.1" stroke-linejoin="round"/>
<path d="M5 7 L14.5 5 M5.8 10 L16 7.8 M6.8 13 L17.5 10.8 M8 16 L18.5 13.8" stroke="#c9ad6a" stroke-width="1.3"/>
</g><path d="M4.3 15 L9.3 20.2 M9.3 15 L4.3 20.2" stroke="#c02800" stroke-width="4.4" stroke-linecap="round"/><path d="M4.3 15 L9.3 20.2 M9.3 15 L4.3 20.2" stroke="#f45a28" stroke-width="2.6" stroke-linecap="round"/></svg>
<div class="t" style="left:762px;top:133.50px;line-height:16px;font:bold 13.33px 'Liberation Serif', serif;line-height:16px;color:#000;letter-spacing:-0.55px">Удалить</div>
<div style="left:5px;top:333px;width:15px;height:1px;background:#aca899;"></div>
<div style="left:111px;top:333px;width:117px;height:1px;background:#aca899;"></div>
<div style="left:5px;top:477px;width:416px;height:1px;background:#ffffff;"></div>
<div style="left:420px;top:461px;width:1px;height:17px;background:#ffffff;"></div>
<div class="t" style="left:20px;top:333.60px;line-height:18px;font:bold 16px 'Liberation Serif', serif;line-height:18px;color:#008000;letter-spacing:-0.12px">Фильтрация</div>
<div style="left:13px;top:358px;width:192px;height:21px;background:#ffffff;"></div>
<div style="left:13px;top:358px;width:192px;height:1px;background:#aca899;"></div>
<div style="left:13px;top:358px;width:1px;height:21px;background:#aca899;"></div>
<div style="left:13px;top:378px;width:192px;height:1px;background:#ffffff;"></div>
<div style="left:204px;top:358px;width:1px;height:21px;background:#ffffff;"></div>
<div style="left:14px;top:359px;width:190px;height:1px;background:#716f64;"></div>
<div style="left:14px;top:359px;width:1px;height:19px;background:#716f64;"></div>
<div style="left:14px;top:377px;width:190px;height:1px;background:#f1efe2;"></div>
<div style="left:203px;top:359px;width:1px;height:19px;background:#f1efe2;"></div>
<div style="left:15px;top:360px;width:20px;height:15px;background:#316ac5;"></div>
<div class="t" style="left:15px;top:359.50px;line-height:16px;font:13.33px 'Liberation Serif', serif;line-height:16px;color:#fff;letter-spacing:-0.3px">Все</div>
<div style="left:186px;top:360px;width:17px;height:18px;background:#ece9d8;"></div>
<div style="left:186px;top:360px;width:17px;height:1px;background:#ffffff;"></div>
<div style="left:186px;top:360px;width:1px;height:18px;background:#ffffff;"></div>
<div style="left:186px;top:377px;width:17px;height:1px;background:#716f64;"></div>
<div style="left:202px;top:360px;width:1px;height:18px;background:#716f64;"></div>
<div style="left:187px;top:376px;width:15px;height:1px;background:#aca899;"></div>
<div style="left:201px;top:361px;width:1px;height:16px;background:#aca899;"></div>
<svg style="position:absolute;left:191px;top:367px" width="8" height="5"><path d="M0 0 H7 L3.5 4 Z" fill="#000"/></svg>
<div style="left:12px;top:380px;width:193px;height:62px;background:#ffffff;border:1px solid #000"></div>
<div style="left:13px;top:381px;width:191px;height:15px;background:#316ac5;"></div>
<div class="t" style="left:14px;top:380.50px;line-height:16px;font:13.33px 'Liberation Serif', serif;line-height:16px;color:#fff;letter-spacing:-0.15px">Все</div>
<div class="t" style="left:14px;top:395.50px;line-height:16px;font:13.33px 'Liberation Serif', serif;line-height:16px;color:#000;letter-spacing:-0.15px">Угнанные</div>
<div class="t" style="left:14px;top:410.50px;line-height:16px;font:13.33px 'Liberation Serif', serif;line-height:16px;color:#000;letter-spacing:-0.15px">Скрывшиеся с места ДТП</div>
<div class="t" style="left:14px;top:425.50px;line-height:16px;font:13.33px 'Liberation Serif', serif;line-height:16px;color:#000;letter-spacing:-0.15px">Найденные</div>
<div class="t" style="left:12px;top:444.88px;line-height:16px;font:bold 12.2px 'Liberation Serif', serif;line-height:16px;color:#000;letter-spacing:0.2px">Общее число</div>
<div class="t" style="left:99px;top:444.50px;line-height:16px;font:bold 13.33px 'Liberation Serif', serif;line-height:16px;color:#000;letter-spacing:0.6px">12</div>
<div style="left:228px;top:341px;width:8px;height:1px;background:#aca899;"></div>
<div style="left:229px;top:342px;width:7px;height:1px;background:#ffffff;"></div>
<div style="left:312px;top:341px;width:108px;height:1px;background:#aca899;"></div>
<div style="left:312px;top:342px;width:107px;height:1px;background:#ffffff;"></div>
<div style="left:228px;top:341px;width:1px;height:120px;background:#aca899;"></div>
<div style="left:229px;top:342px;width:1px;height:118px;background:#ffffff;"></div>
<div style="left:419px;top:341px;width:1px;height:120px;background:#aca899;"></div>
<div style="left:420px;top:341px;width:1px;height:121px;background:#ffffff;"></div>
<div style="left:228px;top:460px;width:192px;height:1px;background:#aca899;"></div>
<div style="left:228px;top:461px;width:193px;height:1px;background:#ffffff;"></div>
<div class="t" style="left:240px;top:333.60px;line-height:18px;font:bold 16px 'Liberation Serif', serif;line-height:18px;color:#008000;">Диапазон</div>
<div class="t" style="left:235px;top:356.88px;line-height:16px;font:bold 12.2px 'Liberation Serif', serif;line-height:16px;color:#000;letter-spacing:0.3px">Начальная дата</div>
<div class="t" style="left:235px;top:396.88px;line-height:16px;font:bold 12.2px 'Liberation Serif', serif;line-height:16px;color:#000;letter-spacing:0.35px">Конечная дата</div>
<div style="left:236px;top:373px;width:177px;height:21px;background:#ffffff;"></div>
<div style="left:236px;top:373px;width:177px;height:1px;background:#aca899;"></div>
<div style="left:236px;top:373px;width:1px;height:21px;background:#aca899;"></div>
<div style="left:237px;top:374px;width:175px;height:1px;background:#716f64;"></div>
<div style="left:237px;top:374px;width:1px;height:19px;background:#716f64;"></div>
<div style="left:236px;top:393px;width:177px;height:1px;background:#ffffff;"></div>
<div style="left:412px;top:373px;width:1px;height:21px;background:#ffffff;"></div>
<div style="left:237px;top:392px;width:175px;height:1px;background:#f1efe2;"></div>
<div style="left:411px;top:374px;width:1px;height:19px;background:#f1efe2;"></div>
<div class="t" style="left:240px;top:375.87px;line-height:16px;font:12px 'Liberation Sans', sans-serif;line-height:16px;color:#000;letter-spacing:-0.62px">24.05.2007</div>
<div style="left:394px;top:375px;width:17px;height:17px;background:#ece9d8;"></div>
<div style="left:394px;top:375px;width:17px;height:1px;background:#ffffff;"></div>
<div style="left:394px;top:375px;width:1px;height:17px;background:#ffffff;"></div>
<div style="left:394px;top:391px;width:17px;height:1px;background:#716f64;"></div>
<div style="left:410px;top:375px;width:1px;height:17px;background:#716f64;"></div>
<div style="left:395px;top:390px;width:15px;height:1px;background:#aca899;"></div>
<div style="left:409px;top:376px;width:1px;height:15px;background:#aca899;"></div>
<svg style="position:absolute;left:399px;top:382px" width="8" height="5"><path d="M0 0 H7 L3.5 4 Z" fill="#000"/></svg>
<div style="left:236px;top:413px;width:177px;height:21px;background:#ffffff;"></div>
<div style="left:236px;top:413px;width:177px;height:1px;background:#aca899;"></div>
<div style="left:236px;top:413px;width:1px;height:21px;background:#aca899;"></div>
<div style="left:237px;top:414px;width:175px;height:1px;background:#716f64;"></div>
<div style="left:237px;top:414px;width:1px;height:19px;background:#716f64;"></div>
<div style="left:236px;top:433px;width:177px;height:1px;background:#ffffff;"></div>
<div style="left:412px;top:413px;width:1px;height:21px;background:#ffffff;"></div>
<div style="left:237px;top:432px;width:175px;height:1px;background:#f1efe2;"></div>
<div style="left:411px;top:414px;width:1px;height:19px;background:#f1efe2;"></div>
<div class="t" style="left:240px;top:415.87px;line-height:16px;font:12px 'Liberation Sans', sans-serif;line-height:16px;color:#000;letter-spacing:-0.62px">24.05.2007</div>
<div style="left:394px;top:415px;width:17px;height:17px;background:#ece9d8;"></div>
<div style="left:394px;top:415px;width:17px;height:1px;background:#ffffff;"></div>
<div style="left:394px;top:415px;width:1px;height:17px;background:#ffffff;"></div>
<div style="left:394px;top:431px;width:17px;height:1px;background:#716f64;"></div>
<div style="left:410px;top:415px;width:1px;height:17px;background:#716f64;"></div>
<div style="left:395px;top:430px;width:15px;height:1px;background:#aca899;"></div>
<div style="left:409px;top:416px;width:1px;height:15px;background:#aca899;"></div>
<svg style="position:absolute;left:399px;top:422px" width="8" height="5"><path d="M0 0 H7 L3.5 4 Z" fill="#000"/></svg>
<div style="left:236px;top:439px;width:13px;height:13px;background:#ffffff;"></div>
<div style="left:236px;top:439px;width:13px;height:1px;background:#aca899;"></div>
<div style="left:236px;top:439px;width:1px;height:13px;background:#aca899;"></div>
<div style="left:237px;top:440px;width:11px;height:1px;background:#716f64;"></div>
<div style="left:237px;top:440px;width:1px;height:11px;background:#716f64;"></div>
<div style="left:237px;top:451px;width:12px;height:1px;background:#ffffff;"></div>
<div style="left:248px;top:439px;width:1px;height:13px;background:#ffffff;"></div>
<div style="left:238px;top:450px;width:10px;height:1px;background:#f1efe2;"></div>
<div style="left:247px;top:440px;width:1px;height:11px;background:#f1efe2;"></div>
<div class="t" style="left:253px;top:436.65px;line-height:16px;font:12.9px 'Liberation Serif', serif;line-height:16px;color:#000;letter-spacing:-0.43px">Включить диапазон</div>
<div style="left:692px;top:453px;width:177px;height:25px;background:#ece9d8;"></div>
<div style="left:692px;top:453px;width:176px;height:1px;background:#ffffff;"></div>
<div style="left:692px;top:453px;width:1px;height:24px;background:#ffffff;"></div>
<div style="left:693px;top:476px;width:175px;height:1px;background:#aca899;"></div>
<div style="left:867px;top:454px;width:1px;height:23px;background:#aca899;"></div>
<div style="left:692px;top:477px;width:177px;height:1px;background:#716f64;"></div>
<div style="left:868px;top:453px;width:1px;height:25px;background:#716f64;"></div>
<svg style="position:absolute;left:747px;top:457px" width="18" height="18"><path d="M3.5 3.7 L12.4 14.1 M13.6 2.2 L2.7 14.9" stroke="#ff1818" stroke-width="3.6" stroke-linecap="butt"/><path d="M4.1 4.3 L12.9 14.6 M14.2 2.9 L3.3 15.4" stroke="#7c0000" stroke-width="3.2" stroke-linecap="butt"/></svg>
<div class="t" style="left:767px;top:456.60px;line-height:18px;font:bold 16px 'Liberation Serif', serif;line-height:18px;color:#000;letter-spacing:0.5px">Выход</div>
</div></body></html>
